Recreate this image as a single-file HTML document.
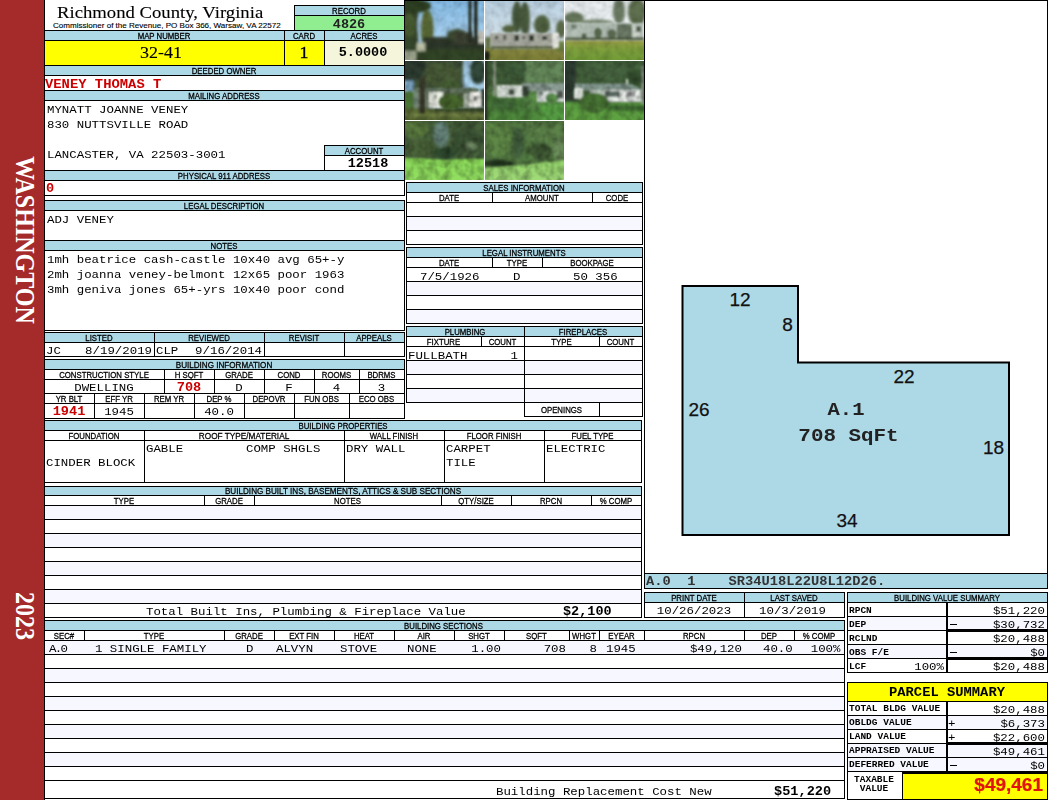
<!DOCTYPE html>
<html><head><meta charset="utf-8"><title>Property Record Card</title>
<style>
html,body{margin:0;padding:0;background:#fff}
#p{position:relative;width:1050px;height:800px;overflow:hidden;background:#fff;font-family:"Liberation Mono",monospace;color:#000}
.b{position:absolute;box-sizing:border-box;border:1px solid #000}
.f{position:absolute}
.t{position:absolute;white-space:pre}
.m{font-family:"Liberation Mono",monospace}
.s{font-family:"Liberation Sans",sans-serif;-webkit-text-stroke-width:0.25px}
.r{font-family:"Liberation Serif",serif}
.k{font-weight:bold}
svg{position:absolute;display:block}
</style></head>
<body><div id="p">
<div class="f" style="left:0px;top:0px;width:44px;height:800px;background:#A52A2A"></div>
<div class="t r k" style="left:24.5px;top:240px;width:0;height:0;color:#fff;font-size:24px;line-height:24px"><div style="position:absolute;left:-150px;width:300px;top:-12px;text-align:center;transform:rotate(90deg) scale(1,1.12);transform-origin:50% 50%">WASHINGTON</div></div>
<div class="t r k" style="left:24.5px;top:616px;width:0;height:0;color:#fff;font-size:24px;line-height:24px"><div style="position:absolute;left:-150px;width:300px;top:-12px;text-align:center;transform:rotate(90deg) scale(1,1.12);transform-origin:50% 50%">2023</div></div>
<div class="f" style="left:44px;top:0px;width:1px;height:800px;background:#000"></div>
<div class="f" style="left:404px;top:0px;width:1px;height:182px;background:#000"></div>
<div class="t r" style="top:1px;font-size:18.7px;line-height:22px;left:57px;transform:scale(1,0.94);transform-origin:0 17px;-webkit-text-stroke-width:0.12px;">Richmond County, Virginia</div>
<div class="t s" style="top:21px;font-size:8.05px;line-height:10px;left:53px;-webkit-text-stroke-width:0.12px;">Commissioner of the Revenue, PO Box 366, Warsaw, VA 22572</div>
<div class="b" style="left:294px;top:5px;width:111px;height:11px;background:#ADD8E6;"></div>
<div class="t s" style="top:7px;font-size:7.8px;line-height:9px;left:49px;width:600px;text-align:center;transform:scale(1,1.15);transform-origin:50% 7px;">RECORD</div>
<div class="b" style="left:294px;top:15px;width:111px;height:16px;background:#90EE90;"></div>
<div class="t m k" style="top:17px;font-size:13.5px;line-height:16px;left:49px;width:600px;text-align:center;color:#222;transform:scale(1,0.88);transform-origin:50% 11px;">4826</div>
<div class="b" style="left:44px;top:30px;width:241px;height:11px;background:#ADD8E6;"></div>
<div class="t s" style="top:32px;font-size:7.8px;line-height:9px;left:-136px;width:600px;text-align:center;transform:scale(1,1.15);transform-origin:50% 7px;">MAP NUMBER</div>
<div class="b" style="left:284px;top:30px;width:41px;height:11px;background:#ADD8E6;"></div>
<div class="t s" style="top:32px;font-size:7.8px;line-height:9px;left:4px;width:600px;text-align:center;transform:scale(1,1.15);transform-origin:50% 7px;">CARD</div>
<div class="b" style="left:324px;top:30px;width:81px;height:11px;background:#ADD8E6;"></div>
<div class="t s" style="top:32px;font-size:7.8px;line-height:9px;left:64px;width:600px;text-align:center;transform:scale(1,1.15);transform-origin:50% 7px;">ACRES</div>
<div class="b" style="left:44px;top:40px;width:241px;height:26px;background:#FFFF00;"></div>
<div class="t r" style="top:41px;font-size:18px;line-height:22px;left:-139px;width:600px;text-align:center;transform:scale(1,0.93);transform-origin:50% 17px;-webkit-text-stroke-width:0.15px;">32-41</div>
<div class="b" style="left:284px;top:40px;width:41px;height:26px;background:#FFFF00;"></div>
<div class="t r" style="top:41px;font-size:18px;line-height:22px;left:4px;width:600px;text-align:center;transform:scale(1,0.93);transform-origin:50% 17px;-webkit-text-stroke-width:0.35px;">1</div>
<div class="b" style="left:324px;top:40px;width:81px;height:26px;background:#F5F5DC;"></div>
<div class="t m k" style="top:45px;font-size:13.5px;line-height:16px;left:63px;width:600px;text-align:center;transform:scale(1,0.88);transform-origin:50% 11px;">5.0000</div>
<div class="b" style="left:44px;top:65px;width:361px;height:11px;background:#ADD8E6;"></div>
<div class="t s" style="top:67px;font-size:7.8px;line-height:9px;left:-76px;width:600px;text-align:center;transform:scale(1,1.15);transform-origin:50% 7px;">DEEDED OWNER</div>
<div class="b" style="left:44px;top:75px;width:361px;height:16px;"></div>
<div class="t m k" style="top:76px;font-size:13.85px;line-height:17px;left:45px;color:#CC0000;transform:scale(1,0.88);transform-origin:0 12px;">VENEY THOMAS T</div>
<div class="b" style="left:44px;top:90px;width:361px;height:11px;background:#ADD8E6;"></div>
<div class="t s" style="top:92px;font-size:7.8px;line-height:9px;left:-76px;width:600px;text-align:center;transform:scale(1,1.15);transform-origin:50% 7px;">MAILING ADDRESS</div>
<div class="b" style="left:44px;top:100px;width:361px;height:71px;"></div>
<div class="t m" style="top:103px;font-size:12.4px;line-height:15px;left:47px;transform:scale(1,0.88);transform-origin:0 10px;">MYNATT JOANNE VENEY</div>
<div class="t m" style="top:118px;font-size:12.4px;line-height:15px;left:47px;transform:scale(1,0.88);transform-origin:0 10px;">830 NUTTSVILLE ROAD</div>
<div class="t m" style="top:148px;font-size:12.4px;line-height:15px;left:47px;transform:scale(1,0.88);transform-origin:0 10px;">LANCASTER, VA 22503-3001</div>
<div class="b" style="left:324px;top:145px;width:81px;height:11px;background:#ADD8E6;"></div>
<div class="t s" style="top:147px;font-size:7.8px;line-height:9px;left:64px;width:600px;text-align:center;transform:scale(1,1.15);transform-origin:50% 7px;">ACCOUNT</div>
<div class="b" style="left:324px;top:155px;width:81px;height:16px;background:#fff;"></div>
<div class="t m k" style="top:156px;font-size:13.5px;line-height:16px;left:68px;width:600px;text-align:center;transform:scale(1,0.88);transform-origin:50% 11px;">12518</div>
<div class="b" style="left:44px;top:170px;width:361px;height:11px;background:#ADD8E6;"></div>
<div class="t s" style="top:172px;font-size:7.8px;line-height:9px;left:-76px;width:600px;text-align:center;transform:scale(1,1.15);transform-origin:50% 7px;">PHYSICAL 911 ADDRESS</div>
<div class="b" style="left:44px;top:180px;width:361px;height:16px;"></div>
<div class="t m k" style="top:181px;font-size:13.6px;line-height:16px;left:46px;color:#CC0000;transform:scale(1,0.88);transform-origin:0 11px;">0</div>
<div class="b" style="left:44px;top:200px;width:361px;height:11px;background:#ADD8E6;"></div>
<div class="t s" style="top:202px;font-size:7.8px;line-height:9px;left:-76px;width:600px;text-align:center;transform:scale(1,1.15);transform-origin:50% 7px;">LEGAL DESCRIPTION</div>
<div class="b" style="left:44px;top:210px;width:361px;height:31px;"></div>
<div class="t m" style="top:213px;font-size:12.4px;line-height:15px;left:47px;transform:scale(1,0.88);transform-origin:0 10px;">ADJ VENEY</div>
<div class="b" style="left:44px;top:240px;width:361px;height:11px;background:#ADD8E6;"></div>
<div class="t s" style="top:242px;font-size:7.8px;line-height:9px;left:-76px;width:600px;text-align:center;transform:scale(1,1.15);transform-origin:50% 7px;">NOTES</div>
<div class="b" style="left:44px;top:250px;width:361px;height:81px;"></div>
<div class="t m" style="top:253px;font-size:12.4px;line-height:15px;left:47px;transform:scale(1,0.88);transform-origin:0 10px;">1mh beatrice cash-castle 10x40 avg 65+-y</div>
<div class="t m" style="top:268px;font-size:12.4px;line-height:15px;left:47px;transform:scale(1,0.88);transform-origin:0 10px;">2mh joanna veney-belmont 12x65 poor 1963</div>
<div class="t m" style="top:283px;font-size:12.4px;line-height:15px;left:47px;transform:scale(1,0.88);transform-origin:0 10px;">3mh geniva jones 65+-yrs 10x40 poor cond</div>
<div class="b" style="left:44px;top:332px;width:111px;height:11px;background:#ADD8E6;"></div>
<div class="t s" style="top:334px;font-size:7.8px;line-height:9px;left:-201.0px;width:600px;text-align:center;transform:scale(1,1.15);transform-origin:50% 7px;">LISTED</div>
<div class="b" style="left:44px;top:342px;width:111px;height:15px;"></div>
<div class="b" style="left:154px;top:332px;width:111px;height:11px;background:#ADD8E6;"></div>
<div class="t s" style="top:334px;font-size:7.8px;line-height:9px;left:-91.0px;width:600px;text-align:center;transform:scale(1,1.15);transform-origin:50% 7px;">REVIEWED</div>
<div class="b" style="left:154px;top:342px;width:111px;height:15px;"></div>
<div class="b" style="left:264px;top:332px;width:81px;height:11px;background:#ADD8E6;"></div>
<div class="t s" style="top:334px;font-size:7.8px;line-height:9px;left:4.0px;width:600px;text-align:center;transform:scale(1,1.15);transform-origin:50% 7px;">REVISIT</div>
<div class="b" style="left:264px;top:342px;width:81px;height:15px;"></div>
<div class="b" style="left:344px;top:332px;width:61px;height:11px;background:#ADD8E6;"></div>
<div class="t s" style="top:334px;font-size:7.8px;line-height:9px;left:74.0px;width:600px;text-align:center;transform:scale(1,1.15);transform-origin:50% 7px;">APPEALS</div>
<div class="b" style="left:344px;top:342px;width:61px;height:15px;"></div>
<div class="t m" style="top:344px;font-size:12.4px;line-height:15px;left:46px;transform:scale(1,0.88);transform-origin:0 10px;">JC</div>
<div class="t m" style="top:344px;font-size:12.4px;line-height:15px;left:-448px;width:600px;text-align:right;transform:scale(1,0.88);transform-origin:100% 10px;">8/19/2019</div>
<div class="t m" style="top:344px;font-size:12.4px;line-height:15px;left:156px;transform:scale(1,0.88);transform-origin:0 10px;">CLP</div>
<div class="t m" style="top:344px;font-size:12.4px;line-height:15px;left:-338px;width:600px;text-align:right;transform:scale(1,0.88);transform-origin:100% 10px;">9/16/2014</div>
<div class="b" style="left:44px;top:359px;width:361px;height:11px;background:#ADD8E6;"></div>
<div class="t s" style="top:361px;font-size:8.1px;line-height:10px;left:-76px;width:600px;text-align:center;transform:scale(1,1.107);transform-origin:50% 7px;">BUILDING INFORMATION</div>
<div class="b" style="left:44px;top:369px;width:121px;height:11px;"></div>
<div class="t s" style="top:371px;font-size:7.8px;line-height:9px;left:-196.0px;width:600px;text-align:center;transform:scale(1,1.15);transform-origin:50% 7px;">CONSTRUCTION STYLE</div>
<div class="b" style="left:44px;top:379px;width:121px;height:15px;"></div>
<div class="t m" style="top:381px;font-size:12.4px;line-height:15px;left:-196.0px;width:600px;text-align:center;transform:scale(1,0.88);transform-origin:50% 10px;">DWELLING</div>
<div class="b" style="left:164px;top:369px;width:51px;height:11px;"></div>
<div class="t s" style="top:371px;font-size:7.8px;line-height:9px;left:-111.0px;width:600px;text-align:center;transform:scale(1,1.15);transform-origin:50% 7px;">H SQFT</div>
<div class="b" style="left:164px;top:379px;width:51px;height:15px;"></div>
<div class="t m k" style="top:380px;font-size:13.6px;line-height:16px;left:-111.0px;width:600px;text-align:center;color:#CC0000;transform:scale(1,0.88);transform-origin:50% 11px;">708</div>
<div class="b" style="left:214px;top:369px;width:51px;height:11px;"></div>
<div class="t s" style="top:371px;font-size:7.8px;line-height:9px;left:-61.0px;width:600px;text-align:center;transform:scale(1,1.15);transform-origin:50% 7px;">GRADE</div>
<div class="b" style="left:214px;top:379px;width:51px;height:15px;"></div>
<div class="t m" style="top:381px;font-size:12.4px;line-height:15px;left:-61.0px;width:600px;text-align:center;transform:scale(1,0.88);transform-origin:50% 10px;">D</div>
<div class="b" style="left:264px;top:369px;width:51px;height:11px;"></div>
<div class="t s" style="top:371px;font-size:7.8px;line-height:9px;left:-11.0px;width:600px;text-align:center;transform:scale(1,1.15);transform-origin:50% 7px;">COND</div>
<div class="b" style="left:264px;top:379px;width:51px;height:15px;"></div>
<div class="t m" style="top:381px;font-size:12.4px;line-height:15px;left:-11.0px;width:600px;text-align:center;transform:scale(1,0.88);transform-origin:50% 10px;">F</div>
<div class="b" style="left:314px;top:369px;width:46px;height:11px;"></div>
<div class="t s" style="top:371px;font-size:7.8px;line-height:9px;left:36.5px;width:600px;text-align:center;transform:scale(1,1.15);transform-origin:50% 7px;">ROOMS</div>
<div class="b" style="left:314px;top:379px;width:46px;height:15px;"></div>
<div class="t m" style="top:381px;font-size:12.4px;line-height:15px;left:36.5px;width:600px;text-align:center;transform:scale(1,0.88);transform-origin:50% 10px;">4</div>
<div class="b" style="left:359px;top:369px;width:46px;height:11px;"></div>
<div class="t s" style="top:371px;font-size:7.8px;line-height:9px;left:81.5px;width:600px;text-align:center;transform:scale(1,1.15);transform-origin:50% 7px;">BDRMS</div>
<div class="b" style="left:359px;top:379px;width:46px;height:15px;"></div>
<div class="t m" style="top:381px;font-size:12.4px;line-height:15px;left:81.5px;width:600px;text-align:center;transform:scale(1,0.88);transform-origin:50% 10px;">3</div>
<div class="b" style="left:44px;top:393px;width:51px;height:11px;"></div>
<div class="t s" style="top:395px;font-size:7.8px;line-height:9px;left:-231.0px;width:600px;text-align:center;transform:scale(1,1.15);transform-origin:50% 7px;">YR BLT</div>
<div class="b" style="left:44px;top:403px;width:51px;height:16px;"></div>
<div class="t m k" style="top:404px;font-size:13.6px;line-height:16px;left:-231.0px;width:600px;text-align:center;color:#CC0000;transform:scale(1,0.88);transform-origin:50% 11px;">1941</div>
<div class="b" style="left:94px;top:393px;width:51px;height:11px;"></div>
<div class="t s" style="top:395px;font-size:7.8px;line-height:9px;left:-181.0px;width:600px;text-align:center;transform:scale(1,1.15);transform-origin:50% 7px;">EFF YR</div>
<div class="b" style="left:94px;top:403px;width:51px;height:16px;"></div>
<div class="t m" style="top:405px;font-size:12.4px;line-height:15px;left:-181.0px;width:600px;text-align:center;transform:scale(1,0.88);transform-origin:50% 10px;">1945</div>
<div class="b" style="left:144px;top:393px;width:51px;height:11px;"></div>
<div class="t s" style="top:395px;font-size:7.8px;line-height:9px;left:-131.0px;width:600px;text-align:center;transform:scale(1,1.15);transform-origin:50% 7px;">REM YR</div>
<div class="b" style="left:144px;top:403px;width:51px;height:16px;"></div>
<div class="b" style="left:194px;top:393px;width:51px;height:11px;"></div>
<div class="t s" style="top:395px;font-size:7.8px;line-height:9px;left:-81.0px;width:600px;text-align:center;transform:scale(1,1.15);transform-origin:50% 7px;">DEP %</div>
<div class="b" style="left:194px;top:403px;width:51px;height:16px;"></div>
<div class="t m" style="top:405px;font-size:12.4px;line-height:15px;left:-81.0px;width:600px;text-align:center;transform:scale(1,0.88);transform-origin:50% 10px;">40.0</div>
<div class="b" style="left:244px;top:393px;width:51px;height:11px;"></div>
<div class="t s" style="top:395px;font-size:7.8px;line-height:9px;left:-31.0px;width:600px;text-align:center;transform:scale(1,1.15);transform-origin:50% 7px;">DEPOVR</div>
<div class="b" style="left:244px;top:403px;width:51px;height:16px;"></div>
<div class="b" style="left:294px;top:393px;width:56px;height:11px;"></div>
<div class="t s" style="top:395px;font-size:7.8px;line-height:9px;left:21.5px;width:600px;text-align:center;transform:scale(1,1.15);transform-origin:50% 7px;">FUN OBS</div>
<div class="b" style="left:294px;top:403px;width:56px;height:16px;"></div>
<div class="b" style="left:349px;top:393px;width:56px;height:11px;"></div>
<div class="t s" style="top:395px;font-size:7.8px;line-height:9px;left:76.5px;width:600px;text-align:center;transform:scale(1,1.15);transform-origin:50% 7px;">ECO OBS</div>
<div class="b" style="left:349px;top:403px;width:56px;height:16px;"></div>
<div class="b" style="left:44px;top:420px;width:598px;height:11px;background:#ADD8E6;"></div>
<div class="t s" style="top:422px;font-size:7.8px;line-height:9px;left:43px;width:600px;text-align:center;transform:scale(1,1.15);transform-origin:50% 7px;">BUILDING PROPERTIES</div>
<div class="b" style="left:44px;top:430px;width:101px;height:11px;"></div>
<div class="t s" style="top:432px;font-size:7.8px;line-height:9px;left:-206.0px;width:600px;text-align:center;transform:scale(1,1.15);transform-origin:50% 7px;">FOUNDATION</div>
<div class="b" style="left:44px;top:440px;width:101px;height:43px;"></div>
<div class="b" style="left:144px;top:430px;width:201px;height:11px;"></div>
<div class="t s" style="top:432px;font-size:8.25px;line-height:10px;left:-56.0px;width:600px;text-align:center;transform:scale(1,1.087);transform-origin:50% 7px;">ROOF TYPE/MATERIAL</div>
<div class="b" style="left:144px;top:440px;width:201px;height:43px;"></div>
<div class="b" style="left:344px;top:430px;width:101px;height:11px;"></div>
<div class="t s" style="top:432px;font-size:7.8px;line-height:9px;left:94.0px;width:600px;text-align:center;transform:scale(1,1.15);transform-origin:50% 7px;">WALL FINISH</div>
<div class="b" style="left:344px;top:440px;width:101px;height:43px;"></div>
<div class="b" style="left:444px;top:430px;width:101px;height:11px;"></div>
<div class="t s" style="top:432px;font-size:7.8px;line-height:9px;left:194.0px;width:600px;text-align:center;transform:scale(1,1.15);transform-origin:50% 7px;">FLOOR FINISH</div>
<div class="b" style="left:444px;top:440px;width:101px;height:43px;"></div>
<div class="b" style="left:544px;top:430px;width:98px;height:11px;"></div>
<div class="t s" style="top:432px;font-size:7.8px;line-height:9px;left:292.5px;width:600px;text-align:center;transform:scale(1,1.15);transform-origin:50% 7px;">FUEL TYPE</div>
<div class="b" style="left:544px;top:440px;width:98px;height:43px;"></div>
<div class="t m" style="top:456px;font-size:12.4px;line-height:15px;left:46px;transform:scale(1,0.88);transform-origin:0 10px;">CINDER BLOCK</div>
<div class="t m" style="top:442px;font-size:12.4px;line-height:15px;left:146px;transform:scale(1,0.88);transform-origin:0 10px;">GABLE</div>
<div class="t m" style="top:442px;font-size:12.4px;line-height:15px;left:246px;transform:scale(1,0.88);transform-origin:0 10px;">COMP SHGLS</div>
<div class="t m" style="top:442px;font-size:12.4px;line-height:15px;left:346px;transform:scale(1,0.88);transform-origin:0 10px;">DRY WALL</div>
<div class="t m" style="top:442px;font-size:12.4px;line-height:15px;left:446px;transform:scale(1,0.88);transform-origin:0 10px;">CARPET</div>
<div class="t m" style="top:456px;font-size:12.4px;line-height:15px;left:446px;transform:scale(1,0.88);transform-origin:0 10px;">TILE</div>
<div class="t m" style="top:442px;font-size:12.4px;line-height:15px;left:546px;transform:scale(1,0.88);transform-origin:0 10px;">ELECTRIC</div>
<div class="b" style="left:44px;top:486px;width:598px;height:10px;background:#ADD8E6;"></div>
<div class="t s" style="top:487px;font-size:8.15px;line-height:10px;left:43px;width:600px;text-align:center;transform:scale(1,1.101);transform-origin:50% 7px;">BUILDING BUILT INS, BASEMENTS, ATTICS &amp; SUB SECTIONS</div>
<div class="b" style="left:44px;top:495px;width:161px;height:11px;"></div>
<div class="t s" style="top:497px;font-size:7.8px;line-height:9px;left:-176.0px;width:600px;text-align:center;transform:scale(1,1.15);transform-origin:50% 7px;">TYPE</div>
<div class="b" style="left:204px;top:495px;width:51px;height:11px;"></div>
<div class="t s" style="top:497px;font-size:7.8px;line-height:9px;left:-71.0px;width:600px;text-align:center;transform:scale(1,1.15);transform-origin:50% 7px;">GRADE</div>
<div class="b" style="left:254px;top:495px;width:188px;height:11px;"></div>
<div class="t s" style="top:497px;font-size:7.8px;line-height:9px;left:47.5px;width:600px;text-align:center;transform:scale(1,1.15);transform-origin:50% 7px;">NOTES</div>
<div class="b" style="left:441px;top:495px;width:71px;height:11px;"></div>
<div class="t s" style="top:497px;font-size:7.8px;line-height:9px;left:176.0px;width:600px;text-align:center;transform:scale(1,1.15);transform-origin:50% 7px;">QTY/SIZE</div>
<div class="b" style="left:511px;top:495px;width:81px;height:11px;"></div>
<div class="t s" style="top:497px;font-size:7.8px;line-height:9px;left:251.0px;width:600px;text-align:center;transform:scale(1,1.15);transform-origin:50% 7px;">RPCN</div>
<div class="b" style="left:591px;top:495px;width:51px;height:11px;"></div>
<div class="t s" style="top:497px;font-size:7.8px;line-height:9px;left:316.0px;width:600px;text-align:center;transform:scale(1,1.15);transform-origin:50% 7px;">% COMP</div>
<div class="b" style="left:44px;top:505px;width:598px;height:15px;background:#F7F7FF;"></div>
<div class="b" style="left:44px;top:519px;width:598px;height:15px;background:#fff;"></div>
<div class="b" style="left:44px;top:533px;width:598px;height:15px;background:#F7F7FF;"></div>
<div class="b" style="left:44px;top:547px;width:598px;height:15px;background:#fff;"></div>
<div class="b" style="left:44px;top:561px;width:598px;height:15px;background:#F7F7FF;"></div>
<div class="b" style="left:44px;top:575px;width:598px;height:15px;background:#fff;"></div>
<div class="b" style="left:44px;top:589px;width:598px;height:15px;background:#F7F7FF;"></div>
<div class="b" style="left:44px;top:603px;width:598px;height:15px;background:#fff;"></div>
<div class="t m" style="top:605px;font-size:12.4px;line-height:15px;left:146px;transform:scale(1,0.88);transform-origin:0 10px;">Total Built Ins, Plumbing &amp; Fireplace Value</div>
<div class="t m k" style="top:604px;font-size:13.5px;line-height:16px;left:563px;transform:scale(1,0.88);transform-origin:0 11px;">$2,100</div>
<div class="b" style="left:44px;top:620px;width:801px;height:11px;background:#ADD8E6;"></div>
<div class="t s" style="top:622px;font-size:7.8px;line-height:9px;left:143.5px;width:600px;text-align:center;transform:scale(1,1.15);transform-origin:50% 7px;">BUILDING SECTIONS</div>
<div class="t s" style="top:632px;font-size:7.8px;line-height:9px;left:-236.0px;width:600px;text-align:center;transform:scale(1,1.15);transform-origin:50% 7px;">SEC#</div>
<div class="t s" style="top:632px;font-size:7.8px;line-height:9px;left:-146.0px;width:600px;text-align:center;transform:scale(1,1.15);transform-origin:50% 7px;">TYPE</div>
<div class="f" style="left:84px;top:631px;width:1px;height:10px;background:#000"></div>
<div class="t s" style="top:632px;font-size:7.8px;line-height:9px;left:-51.0px;width:600px;text-align:center;transform:scale(1,1.15);transform-origin:50% 7px;">GRADE</div>
<div class="f" style="left:224px;top:631px;width:1px;height:10px;background:#000"></div>
<div class="t s" style="top:632px;font-size:7.8px;line-height:9px;left:4.0px;width:600px;text-align:center;transform:scale(1,1.15);transform-origin:50% 7px;">EXT FIN</div>
<div class="f" style="left:274px;top:631px;width:1px;height:10px;background:#000"></div>
<div class="t s" style="top:632px;font-size:7.8px;line-height:9px;left:64.0px;width:600px;text-align:center;transform:scale(1,1.15);transform-origin:50% 7px;">HEAT</div>
<div class="f" style="left:334px;top:631px;width:1px;height:10px;background:#000"></div>
<div class="t s" style="top:632px;font-size:7.8px;line-height:9px;left:124.0px;width:600px;text-align:center;transform:scale(1,1.15);transform-origin:50% 7px;">AIR</div>
<div class="f" style="left:394px;top:631px;width:1px;height:10px;background:#000"></div>
<div class="t s" style="top:632px;font-size:7.8px;line-height:9px;left:179.0px;width:600px;text-align:center;transform:scale(1,1.15);transform-origin:50% 7px;">SHGT</div>
<div class="f" style="left:454px;top:631px;width:1px;height:10px;background:#000"></div>
<div class="t s" style="top:632px;font-size:7.8px;line-height:9px;left:236.5px;width:600px;text-align:center;transform:scale(1,1.15);transform-origin:50% 7px;">SQFT</div>
<div class="f" style="left:504px;top:631px;width:1px;height:10px;background:#000"></div>
<div class="t s" style="top:632px;font-size:7.8px;line-height:9px;left:284.0px;width:600px;text-align:center;transform:scale(1,1.15);transform-origin:50% 7px;">WHGT</div>
<div class="f" style="left:569px;top:631px;width:1px;height:10px;background:#000"></div>
<div class="t s" style="top:632px;font-size:7.8px;line-height:9px;left:321.5px;width:600px;text-align:center;transform:scale(1,1.15);transform-origin:50% 7px;">EYEAR</div>
<div class="f" style="left:599px;top:631px;width:1px;height:10px;background:#000"></div>
<div class="t s" style="top:632px;font-size:7.8px;line-height:9px;left:394.0px;width:600px;text-align:center;transform:scale(1,1.15);transform-origin:50% 7px;">RPCN</div>
<div class="f" style="left:644px;top:631px;width:1px;height:10px;background:#000"></div>
<div class="t s" style="top:632px;font-size:7.8px;line-height:9px;left:469.0px;width:600px;text-align:center;transform:scale(1,1.15);transform-origin:50% 7px;">DEP</div>
<div class="f" style="left:744px;top:631px;width:1px;height:10px;background:#000"></div>
<div class="t s" style="top:632px;font-size:7.8px;line-height:9px;left:519.0px;width:600px;text-align:center;transform:scale(1,1.15);transform-origin:50% 7px;">% COMP</div>
<div class="f" style="left:794px;top:631px;width:1px;height:10px;background:#000"></div>
<div class="b" style="left:44px;top:640px;width:801px;height:15px;background:#F7F7FF;"></div>
<div class="b" style="left:44px;top:654px;width:801px;height:15px;background:#fff;"></div>
<div class="b" style="left:44px;top:668px;width:801px;height:15px;background:#F7F7FF;"></div>
<div class="b" style="left:44px;top:682px;width:801px;height:15px;background:#fff;"></div>
<div class="b" style="left:44px;top:696px;width:801px;height:15px;background:#F7F7FF;"></div>
<div class="b" style="left:44px;top:710px;width:801px;height:15px;background:#fff;"></div>
<div class="b" style="left:44px;top:724px;width:801px;height:15px;background:#F7F7FF;"></div>
<div class="b" style="left:44px;top:738px;width:801px;height:15px;background:#fff;"></div>
<div class="b" style="left:44px;top:752px;width:801px;height:15px;background:#F7F7FF;"></div>
<div class="b" style="left:44px;top:766px;width:801px;height:15px;background:#fff;"></div>
<div class="b" style="left:44px;top:780px;width:801px;height:19px;background:#fff;"></div>
<div class="f" style="left:844px;top:620px;width:1px;height:179px;background:#000"></div>
<div class="t m" style="top:642px;font-size:12.4px;line-height:15px;left:49px;letter-spacing:-1.7px;transform:scale(1,0.88);transform-origin:0 10px;">A.0</div>
<div class="t m" style="top:642px;font-size:12.4px;line-height:15px;left:95px;transform:scale(1,0.88);transform-origin:0 10px;">1 SINGLE FAMILY</div>
<div class="t m" style="top:642px;font-size:12.4px;line-height:15px;left:246px;transform:scale(1,0.88);transform-origin:0 10px;">D</div>
<div class="t m" style="top:642px;font-size:12.4px;line-height:15px;left:276px;transform:scale(1,0.88);transform-origin:0 10px;">ALVYN</div>
<div class="t m" style="top:642px;font-size:12.4px;line-height:15px;left:340px;transform:scale(1,0.88);transform-origin:0 10px;">STOVE</div>
<div class="t m" style="top:642px;font-size:12.4px;line-height:15px;left:407px;transform:scale(1,0.88);transform-origin:0 10px;">NONE</div>
<div class="t m" style="top:642px;font-size:12.4px;line-height:15px;left:-99px;width:600px;text-align:right;transform:scale(1,0.88);transform-origin:100% 10px;">1.00</div>
<div class="t m" style="top:642px;font-size:12.4px;line-height:15px;left:-34px;width:600px;text-align:right;transform:scale(1,0.88);transform-origin:100% 10px;">708</div>
<div class="t m" style="top:642px;font-size:12.4px;line-height:15px;left:-3px;width:600px;text-align:right;transform:scale(1,0.88);transform-origin:100% 10px;">8</div>
<div class="t m" style="top:642px;font-size:12.4px;line-height:15px;left:606px;transform:scale(1,0.88);transform-origin:0 10px;">1945</div>
<div class="t m" style="top:642px;font-size:12.4px;line-height:15px;left:142px;width:600px;text-align:right;transform:scale(1,0.88);transform-origin:100% 10px;">$49,120</div>
<div class="t m" style="top:642px;font-size:12.4px;line-height:15px;left:763px;transform:scale(1,0.88);transform-origin:0 10px;">40.0</div>
<div class="t m" style="top:642px;font-size:12.4px;line-height:15px;left:240.5px;width:600px;text-align:right;transform:scale(1,0.88);transform-origin:100% 10px;">100%</div>
<div class="t m" style="top:785px;font-size:12.4px;line-height:15px;left:496px;transform:scale(1,0.88);transform-origin:0 10px;">Building Replacement Cost New</div>
<div class="t m k" style="top:784px;font-size:13.6px;line-height:16px;left:774px;transform:scale(1,0.88);transform-origin:0 11px;">$51,220</div>
<div class="b" style="left:406px;top:182px;width:237px;height:11px;background:#ADD8E6;"></div>
<div class="t s" style="top:184px;font-size:7.8px;line-height:9px;left:224px;width:600px;text-align:center;transform:scale(1,1.15);transform-origin:50% 7px;">SALES INFORMATION</div>
<div class="b" style="left:406px;top:192px;width:87px;height:11px;"></div>
<div class="t s" style="top:194px;font-size:7.8px;line-height:9px;left:149.0px;width:600px;text-align:center;transform:scale(1,1.15);transform-origin:50% 7px;">DATE</div>
<div class="b" style="left:492px;top:192px;width:101px;height:11px;"></div>
<div class="t s" style="top:194px;font-size:7.8px;line-height:9px;left:242.0px;width:600px;text-align:center;transform:scale(1,1.15);transform-origin:50% 7px;">AMOUNT</div>
<div class="b" style="left:592px;top:192px;width:51px;height:11px;"></div>
<div class="t s" style="top:194px;font-size:7.8px;line-height:9px;left:317.0px;width:600px;text-align:center;transform:scale(1,1.15);transform-origin:50% 7px;">CODE</div>
<div class="b" style="left:406px;top:202px;width:237px;height:15px;background:#fff;"></div>
<div class="b" style="left:406px;top:216px;width:237px;height:15px;background:#F7F7FF;"></div>
<div class="b" style="left:406px;top:230px;width:237px;height:15px;background:#fff;"></div>
<div class="b" style="left:406px;top:247px;width:237px;height:11px;background:#ADD8E6;"></div>
<div class="t s" style="top:249px;font-size:7.8px;line-height:9px;left:224px;width:600px;text-align:center;transform:scale(1,1.15);transform-origin:50% 7px;">LEGAL INSTRUMENTS</div>
<div class="b" style="left:406px;top:257px;width:87px;height:11px;"></div>
<div class="t s" style="top:259px;font-size:7.8px;line-height:9px;left:149.0px;width:600px;text-align:center;transform:scale(1,1.15);transform-origin:50% 7px;">DATE</div>
<div class="b" style="left:492px;top:257px;width:51px;height:11px;"></div>
<div class="t s" style="top:259px;font-size:7.8px;line-height:9px;left:217.0px;width:600px;text-align:center;transform:scale(1,1.15);transform-origin:50% 7px;">TYPE</div>
<div class="b" style="left:542px;top:257px;width:101px;height:11px;"></div>
<div class="t s" style="top:259px;font-size:7.8px;line-height:9px;left:292.0px;width:600px;text-align:center;transform:scale(1,1.15);transform-origin:50% 7px;">BOOKPAGE</div>
<div class="b" style="left:406px;top:267px;width:237px;height:15px;background:#fff;"></div>
<div class="b" style="left:406px;top:281px;width:237px;height:15px;background:#F7F7FF;"></div>
<div class="b" style="left:406px;top:295px;width:237px;height:15px;background:#fff;"></div>
<div class="b" style="left:406px;top:309px;width:237px;height:15px;background:#F7F7FF;"></div>
<div class="t m" style="top:270px;font-size:12.4px;line-height:15px;left:420px;transform:scale(1,0.88);transform-origin:0 10px;">7/5/1926</div>
<div class="t m" style="top:270px;font-size:12.4px;line-height:15px;left:513px;transform:scale(1,0.88);transform-origin:0 10px;">D</div>
<div class="t m" style="top:270px;font-size:12.4px;line-height:15px;left:573px;transform:scale(1,0.88);transform-origin:0 10px;">50 356</div>
<div class="b" style="left:406px;top:326px;width:119px;height:11px;background:#ADD8E6;"></div>
<div class="t s" style="top:328px;font-size:7.8px;line-height:9px;left:165px;width:600px;text-align:center;transform:scale(1,1.15);transform-origin:50% 7px;">PLUMBING</div>
<div class="b" style="left:524px;top:326px;width:119px;height:11px;background:#ADD8E6;"></div>
<div class="t s" style="top:328px;font-size:7.8px;line-height:9px;left:283px;width:600px;text-align:center;transform:scale(1,1.15);transform-origin:50% 7px;">FIREPLACES</div>
<div class="b" style="left:406px;top:336px;width:76px;height:11px;"></div>
<div class="t s" style="top:338px;font-size:7.8px;line-height:9px;left:143.5px;width:600px;text-align:center;transform:scale(1,1.15);transform-origin:50% 7px;">FIXTURE</div>
<div class="b" style="left:481px;top:336px;width:44px;height:11px;"></div>
<div class="t s" style="top:338px;font-size:7.8px;line-height:9px;left:202.5px;width:600px;text-align:center;transform:scale(1,1.15);transform-origin:50% 7px;">COUNT</div>
<div class="b" style="left:524px;top:336px;width:76px;height:11px;"></div>
<div class="t s" style="top:338px;font-size:7.8px;line-height:9px;left:261.5px;width:600px;text-align:center;transform:scale(1,1.15);transform-origin:50% 7px;">TYPE</div>
<div class="b" style="left:599px;top:336px;width:44px;height:11px;"></div>
<div class="t s" style="top:338px;font-size:7.8px;line-height:9px;left:320.5px;width:600px;text-align:center;transform:scale(1,1.15);transform-origin:50% 7px;">COUNT</div>
<div class="b" style="left:406px;top:346px;width:119px;height:15px;background:#fff;"></div>
<div class="b" style="left:524px;top:346px;width:119px;height:15px;background:#fff;"></div>
<div class="b" style="left:406px;top:360px;width:119px;height:15px;background:#F7F7FF;"></div>
<div class="b" style="left:524px;top:360px;width:119px;height:15px;background:#F7F7FF;"></div>
<div class="b" style="left:406px;top:374px;width:119px;height:15px;background:#fff;"></div>
<div class="b" style="left:524px;top:374px;width:119px;height:15px;background:#fff;"></div>
<div class="b" style="left:406px;top:388px;width:119px;height:15px;background:#F7F7FF;"></div>
<div class="b" style="left:524px;top:388px;width:119px;height:15px;background:#F7F7FF;"></div>
<div class="b" style="left:524px;top:402px;width:76px;height:15px;"></div>
<div class="b" style="left:599px;top:402px;width:44px;height:15px;"></div>
<div class="t s" style="top:406px;font-size:7.8px;line-height:9px;left:261.5px;width:600px;text-align:center;transform:scale(1,1.15);transform-origin:50% 7px;">OPENINGS</div>
<div class="t m" style="top:349px;font-size:12.4px;line-height:15px;left:408px;transform:scale(1,0.88);transform-origin:0 10px;">FULLBATH</div>
<div class="t m" style="top:349px;font-size:12.4px;line-height:15px;left:-82px;width:600px;text-align:right;transform:scale(1,0.88);transform-origin:100% 10px;">1</div>
<div class="b" style="left:644px;top:0px;width:404px;height:574px;background:#fff;"></div>
<div class="b" style="left:644px;top:573px;width:404px;height:16px;background:#ADD8E6;"></div>
<div class="t m k" style="top:574px;font-size:13.75px;line-height:16px;left:646px;color:#333;transform:scale(1,0.88);transform-origin:0 11px;">A.0  1    SR34U18L22U8L12D26.</div>
<svg style="left:644px;top:0" width="404" height="574" viewBox="644 0 404 574"><polygon points="682.5,286 798,286 798,362.5 1009,362.5 1009,535 682.5,535" fill="#ADD8E6" stroke="#000" stroke-width="2"/></svg>
<div class="t s" style="top:288px;font-size:19px;line-height:23px;left:440px;width:600px;text-align:center;color:#111;">12</div>
<div class="t s" style="top:313px;font-size:19px;line-height:23px;left:487.5px;width:600px;text-align:center;color:#111;">8</div>
<div class="t s" style="top:365px;font-size:19px;line-height:23px;left:604px;width:600px;text-align:center;color:#111;">22</div>
<div class="t s" style="top:398px;font-size:19px;line-height:23px;left:399px;width:600px;text-align:center;color:#111;">26</div>
<div class="t s" style="top:436px;font-size:19px;line-height:23px;left:693.5px;width:600px;text-align:center;color:#111;">18</div>
<div class="t s" style="top:509px;font-size:19px;line-height:23px;left:547px;width:600px;text-align:center;color:#111;">34</div>
<div class="t m k" style="top:397px;font-size:20.5px;line-height:25px;left:546px;width:600px;text-align:center;color:#222;transform:scale(1,0.86);transform-origin:50% 18px;">A.1</div>
<div class="t m k" style="top:423px;font-size:20.9px;line-height:25px;left:548.5px;width:600px;text-align:center;color:#222;transform:scale(1,0.86);transform-origin:50% 18px;">708 SqFt</div>
<div class="b" style="left:644px;top:592px;width:101px;height:11px;background:#ADD8E6;"></div>
<div class="t s" style="top:594px;font-size:7.8px;line-height:9px;left:394.0px;width:600px;text-align:center;transform:scale(1,1.15);transform-origin:50% 7px;">PRINT DATE</div>
<div class="b" style="left:644px;top:602px;width:101px;height:16px;background:#fff;"></div>
<div class="t m" style="top:604px;font-size:12.4px;line-height:15px;left:394.0px;width:600px;text-align:center;transform:scale(1,0.88);transform-origin:50% 10px;">10/26/2023</div>
<div class="b" style="left:744px;top:592px;width:101px;height:11px;background:#ADD8E6;"></div>
<div class="t s" style="top:594px;font-size:7.8px;line-height:9px;left:494.0px;width:600px;text-align:center;transform:scale(1,1.15);transform-origin:50% 7px;">LAST SAVED</div>
<div class="b" style="left:744px;top:602px;width:101px;height:16px;background:#fff;"></div>
<div class="t m" style="top:604px;font-size:12.4px;line-height:15px;left:492.5px;width:600px;text-align:center;transform:scale(1,0.88);transform-origin:50% 10px;">10/3/2019</div>
<div class="b" style="left:847px;top:592px;width:201px;height:11px;background:#ADD8E6;"></div>
<div class="t s" style="top:594px;font-size:7.8px;line-height:9px;left:647px;width:600px;text-align:center;transform:scale(1,1.15);transform-origin:50% 7px;">BUILDING VALUE SUMMARY</div>
<div class="b" style="left:847px;top:602px;width:101px;height:15px;background:#fff;"></div>
<div class="b" style="left:947px;top:602px;width:101px;height:15px;background:#fff;"></div>
<div class="t m k" style="top:605px;font-size:9.5px;line-height:11px;left:849px;transform:scale(1,0.88);transform-origin:0 8px;">RPCN</div>
<div class="t m" style="top:604px;font-size:12.4px;line-height:15px;left:445px;width:600px;text-align:right;transform:scale(1,0.88);transform-origin:100% 10px;">$51,220</div>
<div class="b" style="left:847px;top:616px;width:101px;height:15px;background:#F7F7FF;"></div>
<div class="b" style="left:947px;top:616px;width:101px;height:15px;background:#F7F7FF;"></div>
<div class="t m k" style="top:619px;font-size:9.5px;line-height:11px;left:849px;transform:scale(1,0.88);transform-origin:0 8px;">DEP</div>
<div class="f" style="left:950px;top:624px;width:7px;height:1px;background:#000"></div>
<div class="t m" style="top:618px;font-size:12.4px;line-height:15px;left:445px;width:600px;text-align:right;transform:scale(1,0.88);transform-origin:100% 10px;">$30,732</div>
<div class="b" style="left:847px;top:630px;width:101px;height:15px;background:#fff;"></div>
<div class="b" style="left:947px;top:630px;width:101px;height:15px;background:#fff;"></div>
<div class="t m k" style="top:633px;font-size:9.5px;line-height:11px;left:849px;transform:scale(1,0.88);transform-origin:0 8px;">RCLND</div>
<div class="t m" style="top:632px;font-size:12.4px;line-height:15px;left:445px;width:600px;text-align:right;transform:scale(1,0.88);transform-origin:100% 10px;">$20,488</div>
<div class="b" style="left:847px;top:644px;width:101px;height:15px;background:#F7F7FF;"></div>
<div class="b" style="left:947px;top:644px;width:101px;height:15px;background:#F7F7FF;"></div>
<div class="t m k" style="top:647px;font-size:9.5px;line-height:11px;left:849px;transform:scale(1,0.88);transform-origin:0 8px;">OBS F/E</div>
<div class="f" style="left:950px;top:652px;width:7px;height:1px;background:#000"></div>
<div class="t m" style="top:646px;font-size:12.4px;line-height:15px;left:445px;width:600px;text-align:right;transform:scale(1,0.88);transform-origin:100% 10px;">$0</div>
<div class="b" style="left:847px;top:658px;width:101px;height:15px;background:#fff;"></div>
<div class="b" style="left:947px;top:658px;width:101px;height:15px;background:#fff;"></div>
<div class="t m k" style="top:661px;font-size:9.5px;line-height:11px;left:849px;transform:scale(1,0.88);transform-origin:0 8px;">LCF</div>
<div class="t m" style="top:660px;font-size:12.4px;line-height:15px;left:445px;width:600px;text-align:right;transform:scale(1,0.88);transform-origin:100% 10px;">$20,488</div>
<div class="t m" style="top:660px;font-size:12.4px;line-height:15px;left:344px;width:600px;text-align:right;transform:scale(1,0.88);transform-origin:100% 10px;">100%</div>
<div class="f" style="left:947px;top:629px;width:101px;height:3px;background:#000"></div>
<div class="f" style="left:947px;top:657px;width:101px;height:3px;background:#000"></div>
<div class="f" style="left:946px;top:602px;width:2px;height:71px;background:#000"></div>
<div class="b" style="left:847px;top:682px;width:201px;height:20px;background:#FFFF00;"></div>
<div class="t m k" style="top:684px;font-size:13.8px;line-height:17px;left:647px;width:600px;text-align:center;transform:scale(1,0.88);transform-origin:50% 12px;">PARCEL SUMMARY</div>
<div class="b" style="left:847px;top:701px;width:101px;height:15px;background:#fff;"></div>
<div class="b" style="left:947px;top:701px;width:101px;height:15px;background:#fff;"></div>
<div class="t m k" style="top:703px;font-size:9.5px;line-height:11px;left:849px;transform:scale(1,0.88);transform-origin:0 8px;">TOTAL BLDG VALUE</div>
<div class="t m" style="top:703px;font-size:12.4px;line-height:15px;left:445px;width:600px;text-align:right;transform:scale(1,0.88);transform-origin:100% 10px;">$20,488</div>
<div class="b" style="left:847px;top:715px;width:101px;height:15px;background:#F7F7FF;"></div>
<div class="b" style="left:947px;top:715px;width:101px;height:15px;background:#F7F7FF;"></div>
<div class="t m k" style="top:717px;font-size:9.5px;line-height:11px;left:849px;transform:scale(1,0.88);transform-origin:0 8px;">OBLDG VALUE</div>
<div class="t m" style="top:717px;font-size:12.4px;line-height:15px;left:948px;transform:scale(1,0.88);transform-origin:0 10px;">+</div>
<div class="t m" style="top:717px;font-size:12.4px;line-height:15px;left:445px;width:600px;text-align:right;transform:scale(1,0.88);transform-origin:100% 10px;">$6,373</div>
<div class="b" style="left:847px;top:729px;width:101px;height:15px;background:#fff;"></div>
<div class="b" style="left:947px;top:729px;width:101px;height:15px;background:#fff;"></div>
<div class="t m k" style="top:731px;font-size:9.5px;line-height:11px;left:849px;transform:scale(1,0.88);transform-origin:0 8px;">LAND VALUE</div>
<div class="t m" style="top:731px;font-size:12.4px;line-height:15px;left:948px;transform:scale(1,0.88);transform-origin:0 10px;">+</div>
<div class="t m" style="top:731px;font-size:12.4px;line-height:15px;left:445px;width:600px;text-align:right;transform:scale(1,0.88);transform-origin:100% 10px;">$22,600</div>
<div class="b" style="left:847px;top:743px;width:101px;height:15px;background:#F7F7FF;"></div>
<div class="b" style="left:947px;top:743px;width:101px;height:15px;background:#F7F7FF;"></div>
<div class="t m k" style="top:745px;font-size:9.5px;line-height:11px;left:849px;transform:scale(1,0.88);transform-origin:0 8px;">APPRAISED VALUE</div>
<div class="t m" style="top:745px;font-size:12.4px;line-height:15px;left:445px;width:600px;text-align:right;transform:scale(1,0.88);transform-origin:100% 10px;">$49,461</div>
<div class="b" style="left:847px;top:757px;width:101px;height:15px;background:#F7F7FF;"></div>
<div class="b" style="left:947px;top:757px;width:101px;height:15px;background:#F7F7FF;"></div>
<div class="t m k" style="top:759px;font-size:9.5px;line-height:11px;left:849px;transform:scale(1,0.88);transform-origin:0 8px;">DEFERRED VALUE</div>
<div class="f" style="left:950px;top:765px;width:7px;height:1px;background:#000"></div>
<div class="t m" style="top:759px;font-size:12.4px;line-height:15px;left:445px;width:600px;text-align:right;transform:scale(1,0.88);transform-origin:100% 10px;">$0</div>
<div class="f" style="left:947px;top:742px;width:101px;height:3px;background:#000"></div>
<div class="f" style="left:946px;top:701px;width:2px;height:71px;background:#000"></div>
<div class="b" style="left:847px;top:771px;width:201px;height:29px;background:#fff;"></div>
<div class="b" style="left:902px;top:771px;width:146px;height:29px;background:#FFFF00;"></div>
<div class="f" style="left:902px;top:771px;width:146px;height:3px;background:#000"></div>
<div class="t m k" style="top:774px;font-size:9.5px;line-height:11px;left:574px;width:600px;text-align:center;transform:scale(1,0.88);transform-origin:50% 8px;">TAXABLE</div>
<div class="t m k" style="top:783px;font-size:9.5px;line-height:11px;left:574px;width:600px;text-align:center;transform:scale(1,0.88);transform-origin:50% 8px;">VALUE</div>
<div class="t s k" style="top:773px;font-size:19px;line-height:23px;left:443px;width:600px;text-align:right;color:#E0140F;transform:scale(1,0.96);transform-origin:100% 18px;">$49,461</div>
<div class="f" style="left:405px;top:0px;width:239px;height:1px;background:#000"></div>
<svg style="left:405px;top:1px" width="239" height="179" viewBox="0 0 239 179"><defs><filter id="b1" x="-20%" y="-20%" width="140%" height="140%"><feGaussianBlur stdDeviation="1.6"/></filter><filter id="b2" x="-20%" y="-20%" width="140%" height="140%"><feGaussianBlur stdDeviation="0.8"/></filter><filter id="nz" x="0" y="0" width="100%" height="100%"><feTurbulence type="fractalNoise" baseFrequency="0.13" numOctaves="2" seed="7" result="n"/><feColorMatrix in="n" type="matrix" values="0 0 0 0 0  0 0 0 0 0  0 0 0 0 0  1.2 1.2 0 0 -0.9"/></filter><linearGradient id="sk1" x1="0" y1="0" x2="0" y2="1"><stop offset="0" stop-color="#86BDE8"/><stop offset="1" stop-color="#BFDDF2"/></linearGradient><linearGradient id="sk2" x1="0" y1="0" x2="0" y2="1"><stop offset="0" stop-color="#BCD3E4"/><stop offset="1" stop-color="#DDE6EA"/></linearGradient><linearGradient id="gr3" x1="0" y1="0" x2="0" y2="1"><stop offset="0" stop-color="#9C9C48"/><stop offset="0.35" stop-color="#7FA03C"/><stop offset="1" stop-color="#6C9A36"/></linearGradient><linearGradient id="gr7" x1="0" y1="0" x2="0" y2="1"><stop offset="0" stop-color="#8AD858"/><stop offset="1" stop-color="#93E062"/></linearGradient><linearGradient id="gr8" x1="0" y1="0" x2="0" y2="1"><stop offset="0" stop-color="#93D26A"/><stop offset="1" stop-color="#A2DC7A"/></linearGradient></defs><svg x="0" y="0" width="79" height="59" viewBox="0 0 79 59"><rect width="79" height="59" fill="url(#sk1)"/><g filter="url(#b1)"><rect x="-4" y="-4" width="17" height="56" fill="#34472A"/><ellipse cx="15.5" cy="24" rx="2.6" ry="8" fill="#A9CBE4"/><ellipse cx="22" cy="28" rx="6.5" ry="19" fill="#5A6B36"/><ellipse cx="9" cy="5" rx="17" ry="7" fill="#2F4020"/><ellipse cx="4" cy="24" rx="6" ry="12" fill="#4A5C30"/><rect x="18" y="36" width="64" height="18" fill="#2E382A"/><ellipse cx="52" cy="34" rx="10" ry="6" fill="#3A4A2E"/><rect x="49" y="31" width="18" height="12" fill="#3A4032"/><rect x="-3" y="48" width="86" height="14" fill="#324426"/><rect x="-3" y="50" width="14" height="12" fill="#9EA68E"/><rect x="12" y="42" width="8" height="8" fill="#C2C8AC"/><rect x="72" y="30" width="8" height="12" fill="#C8C8BE"/></g><g filter="url(#b2)"><rect x="63.5" y="-1" width="3" height="44" fill="#2A3026"/><rect x="69" y="-1" width="3.6" height="46" fill="#2A2E26"/></g><rect width="79" height="59" filter="url(#nz)" opacity="0.18"/></svg><svg x="80" y="0" width="79" height="59" viewBox="0 0 79 59"><rect width="79" height="59" fill="url(#sk2)"/><g filter="url(#b1)"><ellipse cx="32" cy="16" rx="5" ry="16" fill="#44563A"/><ellipse cx="40" cy="18" rx="5" ry="17" fill="#485A3C"/><ellipse cx="57" cy="24" rx="8" ry="10" fill="#50623F"/><ellipse cx="24" cy="28" rx="7" ry="4" fill="#55653F"/><ellipse cx="76" cy="28" rx="5" ry="9" fill="#5A6B48"/><rect x="-3" y="47" width="86" height="16" fill="#84853E"/><rect x="-3" y="54" width="86" height="9" fill="#7D7F38"/><rect x="0" y="36" width="8" height="12" fill="#5F6F45"/><rect x="70" y="40" width="10" height="10" fill="#6A8040"/></g><g filter="url(#b2)"><rect x="5" y="32" width="64" height="15.5" fill="#A9ABA1"/><rect x="67" y="32" width="7" height="15" fill="#E4E4DE"/><rect x="10" y="35" width="3" height="3" fill="#3A3E38"/><rect x="18.5" y="34" width="2.5" height="5" fill="#4A4E44"/><rect x="29.5" y="34" width="4.5" height="6" fill="#33372F"/><rect x="37.5" y="35.5" width="2.5" height="2.5" fill="#3A3E36"/><rect x="44" y="34" width="5" height="6" fill="#33372F"/><rect x="57" y="35" width="5" height="4" fill="#3A3E36"/><rect x="6" y="45" width="62" height="3" fill="#5E6A46"/><ellipse cx="2" cy="55" rx="2.5" ry="5" fill="#1E2218"/></g><rect width="79" height="59" filter="url(#nz)" opacity="0.15"/></svg><svg x="160" y="0" width="79" height="59" viewBox="0 0 79 59"><rect width="79" height="59" fill="#E9EEF0"/><g filter="url(#b1)"><ellipse cx="54" cy="10" rx="6" ry="13" fill="#6B7A62"/><ellipse cx="72" cy="11" rx="9" ry="14" fill="#5E6F50"/><ellipse cx="9" cy="17" rx="10" ry="6" fill="#65765A"/><ellipse cx="30" cy="21" rx="18" ry="2.5" fill="#7A8A72"/><rect x="-3" y="39" width="86" height="24" fill="url(#gr3)"/></g><g filter="url(#b2)"><rect x="1" y="22" width="77" height="15.5" fill="#B4C0B6"/><rect x="52" y="23" width="15" height="14" fill="#6C7A66"/><rect x="67" y="24" width="9" height="12" fill="#C9D0C8"/><rect x="71" y="25" width="5" height="6" fill="#55604F"/><rect x="6" y="23" width="6" height="5" fill="#7C8A78"/><ellipse cx="33" cy="32" rx="4" ry="5.5" fill="#55664C"/><ellipse cx="47" cy="33" rx="4.5" ry="5" fill="#5A6A50"/><ellipse cx="19" cy="35" rx="2.5" ry="3" fill="#56664E"/><rect x="0" y="36.5" width="79" height="2.5" fill="#46573A"/></g><rect width="79" height="59" filter="url(#nz)" opacity="0.15"/></svg><svg x="0" y="60" width="79" height="59" viewBox="0 0 79 59"><rect width="79" height="59" fill="#A9D1EC"/><g filter="url(#b1)"><rect x="-4" y="-4" width="62" height="33" fill="#43553A"/><ellipse cx="8" cy="8" rx="14" ry="12" fill="#2E3C30"/><ellipse cx="36" cy="14" rx="18" ry="12" fill="#4A5C38"/><ellipse cx="45" cy="25" rx="10" ry="6" fill="#466034"/><ellipse cx="73" cy="10" rx="8" ry="13" fill="#33483A"/><rect x="-3" y="20" width="11" height="9" fill="#86B4D6"/><rect x="-3" y="30" width="12" height="20" fill="#4C7434"/><rect x="9" y="29" width="16" height="19" fill="#7D8E80"/><rect x="-3" y="47" width="86" height="16" fill="#566832"/><rect x="30" y="46" width="52" height="5" fill="#3A4A2C"/><rect x="-3" y="52" width="86" height="4" fill="#6F7F42"/></g><g filter="url(#b2)"><rect x="22" y="28" width="52" height="19" fill="#55664A"/><rect x="10" y="27" width="62" height="4.5" fill="#64745F"/><rect x="24" y="31" width="14" height="16" fill="#ECF0E6"/><rect x="59" y="33" width="7" height="13" fill="#A8B2A4"/><rect x="65" y="31" width="11" height="15" fill="#F1F1EB"/><rect x="68.5" y="35" width="3.5" height="5" fill="#6A6A66"/><rect x="29.5" y="33" width="2" height="5" fill="#7A8272"/><ellipse cx="46" cy="41" rx="12.5" ry="8" fill="#48682E"/><rect x="14.5" y="16" width="5.5" height="36" fill="#3B3A2A"/><rect x="76" y="28" width="4" height="18" fill="#2F4030"/></g><rect width="79" height="59" filter="url(#nz)" opacity="0.3"/></svg><svg x="80" y="60" width="79" height="59" viewBox="0 0 79 59"><rect width="79" height="59" fill="#557A48"/><g filter="url(#b1)"><rect x="-3" y="-3" width="45" height="28" fill="#3F5C38"/><rect x="40" y="-3" width="42" height="26" fill="#65895A"/><ellipse cx="30" cy="8" rx="12" ry="6" fill="#3F5E3A"/><rect x="-3" y="34" width="86" height="28" fill="#467638"/><rect x="55" y="43" width="28" height="20" fill="#58A244"/><ellipse cx="18" cy="42" rx="12" ry="6" fill="#44703A"/><ellipse cx="48" cy="40" rx="10" ry="8" fill="#5A8E48"/><rect x="-3" y="51" width="60" height="12" fill="#4F8A3E"/></g><g filter="url(#b2)"><rect x="12" y="24" width="26" height="12.5" fill="#D6DED6"/><rect x="37" y="22" width="43" height="8" fill="#8C9E96"/><rect x="52" y="30" width="28" height="11" fill="#D2DAD6"/><rect x="23.5" y="28" width="6" height="6" fill="#555F52"/><rect x="37" y="25" width="6" height="10" fill="#3B4A3A"/><rect x="53" y="30" width="5" height="4" fill="#7C8A80"/><rect x="71.5" y="30" width="7" height="7" fill="#566058"/><rect x="-1" y="-1" width="3.5" height="62" fill="#2A3726"/><rect x="8" y="-1" width="3" height="36" fill="#87937F"/><ellipse cx="67" cy="38" rx="6" ry="6" fill="#5E9650"/></g><rect width="79" height="59" filter="url(#nz)" opacity="0.3"/></svg><svg x="160" y="60" width="79" height="59" viewBox="0 0 79 59"><rect width="79" height="59" fill="#42603A"/><g filter="url(#b1)"><rect x="-3" y="-3" width="14" height="50" fill="#2E3E30"/><ellipse cx="45" cy="8" rx="30" ry="10" fill="#466540"/><ellipse cx="70" cy="16" rx="8" ry="8" fill="#34502F"/><rect x="-3" y="41" width="86" height="22" fill="#5A9A40"/><rect x="42" y="44" width="40" height="6" fill="#3E6A30"/><rect x="-3" y="50" width="86" height="12" fill="#5FA243"/></g><g filter="url(#b2)"><rect x="10" y="22.5" width="54" height="7" fill="#889E94"/><polygon points="56,29 66,23 76,28 76,30 56,30" fill="#7F968C"/><rect x="40" y="29" width="36" height="12" fill="#E6EBE6"/><rect x="9" y="27" width="9" height="11" fill="#DDE4DC"/><rect x="25" y="29" width="16" height="8" fill="#B9C6BA"/><rect x="40" y="30" width="15" height="6" fill="#5F6D66"/><rect x="61.5" y="30" width="2" height="6" fill="#6C6470"/><rect x="68" y="30" width="2" height="6" fill="#6C6470"/><rect x="64.5" y="30.5" width="2.5" height="5" fill="#4A5050"/><rect x="61" y="18" width="2.2" height="5" fill="#C8D0C8"/><ellipse cx="29" cy="42" rx="15" ry="10" fill="#487434"/><rect x="76.5" y="5" width="2.5" height="38" fill="#8C968A"/></g><rect width="79" height="59" filter="url(#nz)" opacity="0.3"/></svg><svg x="0" y="120" width="79" height="59" viewBox="0 0 79 59"><rect width="79" height="59" fill="#48623C"/><g filter="url(#b1)"><ellipse cx="10" cy="8" rx="14" ry="9" fill="#5C7D40"/><ellipse cx="36" cy="13" rx="8" ry="13" fill="#67867C"/><ellipse cx="62" cy="20" rx="16" ry="14" fill="#3C5434"/><ellipse cx="16" cy="27" rx="14" ry="9" fill="#4A6238"/><ellipse cx="40" cy="32" rx="12" ry="6" fill="#2F4A2E"/><ellipse cx="66" cy="25" rx="6" ry="4" fill="#6C8560"/></g><g filter="url(#b2)"><path d="M-2 36.5 L20 37.5 L40 39 L60 38 L81 37.5 L81 61 L-2 61 Z" fill="url(#gr7)"/></g><rect width="79" height="59" filter="url(#nz)" opacity="0.35"/></svg><svg x="80" y="120" width="79" height="59" viewBox="0 0 79 59"><rect width="79" height="59" fill="#557A44"/><g filter="url(#b1)"><ellipse cx="12" cy="18" rx="16" ry="18" fill="#5E8846"/><ellipse cx="33" cy="22" rx="6" ry="16" fill="#42603C"/><ellipse cx="62" cy="12" rx="18" ry="11" fill="#5C8248"/><ellipse cx="55" cy="31" rx="11" ry="9" fill="#3F5A34"/><ellipse cx="74" cy="28" rx="6" ry="12" fill="#6A8C5A"/><ellipse cx="13" cy="42.5" rx="16" ry="3.5" fill="#24361F"/><ellipse cx="42" cy="37" rx="6" ry="4" fill="#5C8A4A"/></g><g filter="url(#b2)"><path d="M-2 47 L20 45.5 L45 43 L81 39 L81 61 L-2 61 Z" fill="url(#gr8)"/></g><rect width="79" height="59" filter="url(#nz)" opacity="0.35"/></svg></svg>
</div></body></html>
